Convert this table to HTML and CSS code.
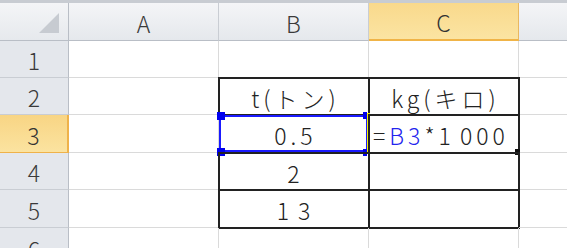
FILE: index.html
```html
<!DOCTYPE html>
<html lang="ja">
<head>
<meta charset="utf-8">
<link rel="stylesheet" href="styles.css">
</head>
<body>
<div class="topband"></div>
<div class="sheet">
  <div class="corner"><span class="tri"></span></div>
  <div class="ch">A</div>
  <div class="ch">B</div>
  <div class="ch ch-sel">C</div>
  <div class="ch ch-last"></div>

  <div class="rh">1</div>
  <div class="c"></div><div class="c"></div><div class="c"></div><div class="c last"></div>

  <div class="rh">2</div>
  <div class="c"></div><div class="c t">t(トン)</div><div class="c t">kg(キロ)</div><div class="c last"></div>

  <div class="rh rh-sel">3</div>
  <div class="c"></div><div class="c t ref">0.5<i class="h h1"></i><i class="h h2"></i><i class="h h3"></i><i class="h h4"></i></div><div class="c t edit"><span class="blk">=</span><span class="blue">B3</span><span class="blk">*<span class="one">1</span>000</span><i class="fill"></i></div><div class="c last"></div>

  <div class="rh">4</div>
  <div class="c"></div><div class="c t">2</div><div class="c t"></div><div class="c last"></div>

  <div class="rh">5</div>
  <div class="c"></div><div class="c t"><span class="one">1</span>3</div><div class="c t"></div><div class="c last"></div>

  <div class="rh">6</div>
  <div class="c"></div><div class="c"></div><div class="c"></div><div class="c last"></div>
</div>
</body>
</html>
```
FILE: styles.css
```css
* { box-sizing: border-box; }
html, body { margin: 0; padding: 0; background: #fff; overflow: hidden; }
body { width: 567px; height: 248px; font-family: "Noto Sans CJK JP", "DejaVu Sans", sans-serif; }
.topband { height: 3px; background: #c8ccd2; }
.sheet {
  display: grid;
  grid-template-columns: 69px 150px 150px 150px 1fr;
  grid-template-rows: 38px 37px 37px 38px 37px 38px 40px;
}
.corner {
  background: linear-gradient(#f4f5f7, #e6e9ed);
  border-right: 1px solid #b9bec6;
  border-bottom: 1px solid #b9bec6;
  position: relative;
}
.tri {
  position: absolute; right: 9px; bottom: 7px;
  width: 0; height: 0;
  border-left: 20px solid transparent;
  border-bottom: 20px solid #c7cbd1;
}
.ch {
  background: linear-gradient(#f4f5f7, #e5e8ec);
  border-right: 1px solid #c9cdd3;
  border-bottom: 1px solid #b9bec6;
  display: flex; align-items: center; justify-content: center;
  font-size: 23px; color: #3a3a3a; font-weight: 300;
  padding-top: 2px;
}
.ch-sel {
  background: linear-gradient(#f9d98c, #fbe4a2);
  border-bottom: 2px solid #f0b447;
  border-right: 1px solid #e9b860;
  color: #333;
}
.ch-last { border-right: none; }
.rh {
  background: #e4e7ec;
  border-right: 1px solid #b9bec6;
  border-bottom: 1px solid #c9cdd3;
  display: flex; align-items: center; justify-content: center;
  font-size: 23px; color: #3a3a3a; font-weight: 300;
  padding-top: 2px;
}
.rh-sel {
  background: linear-gradient(#f8d584, #fbe3a0);
  border-right: 2px solid #efb24a;
  border-bottom: 1px solid #efb24a;
  color: #333;
}
.c {
  border-right: 1px solid #dadada;
  border-bottom: 1px solid #dadada;
  display: flex; align-items: center; justify-content: center;
  font-size: 23px; color: #222; font-weight: 300;
  letter-spacing: 4px;
  padding-top: 3px;
  position: relative;
}
.c.last { border-right: none; }
.t { outline: 2px solid #222; outline-offset: -1px; padding-left: 4px; }
.one { letter-spacing: 9px; }
.ref { box-shadow: inset 0 0 0 2px #1a1aff; outline: none; }
.ref::after {
  content: ""; position: absolute; right: -2px; top: -2px; bottom: -2px; width: 3px;
  background: #f5f000;
}
.h { position: absolute; background: #0000ee; }
.h1 { left: -2px; top: -3px; width: 8px; height: 8px; }
.h2 { left: -2px; bottom: -4px; width: 8px; height: 8px; }
.h3 { right: 1px; top: -3px; width: 4px; height: 7px; }
.h4 { right: 1px; bottom: -4px; width: 4px; height: 7px; }
.edit { justify-content: flex-start; padding-left: 4px; }
.blue { color: #2323ee; }
.blk { color: #222; }
.fill {
  position: absolute; right: -2px; bottom: -3px; width: 5px; height: 6px; background: #111;
}
```
